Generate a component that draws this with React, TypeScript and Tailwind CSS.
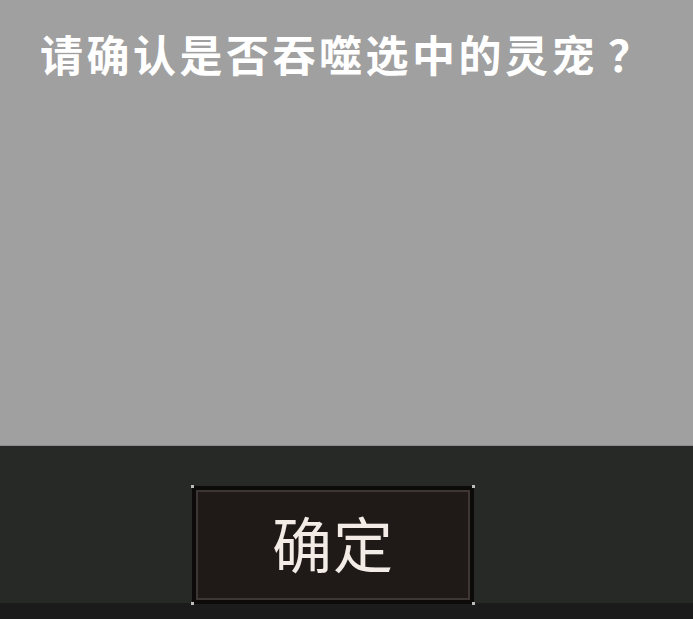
export default function App() {
  return (
    <div className="w-[693px] h-[619px] flex flex-col overflow-hidden" style={{ fontFamily: '"Noto Sans CJK SC", "Noto Sans", sans-serif' }}>
      <div className="h-[445px] bg-[#a0a0a0] pl-[40px] pt-[25px]">
        <div className="text-[43px] leading-[56px] font-bold text-white tracking-[3.5px] whitespace-nowrap">请确认是否吞噬选中的灵宠<span className="tracking-normal pl-[10px]">？</span></div>
      </div>
      <div className="h-[158px] bg-[#272927] flex pl-[192px] pt-[40px] border-t border-[#8c8c8c]">
        <div className="relative w-[282px] h-[118px] bg-[#0d0b0a] p-[4px]">
          <div className="w-full h-full border-2 border-[#3e3634] bg-[#1f1917] flex items-center justify-center">
            <span className="text-[60px] leading-none text-[#f2ebe6] tracking-[1px] -mt-[6px]">确定</span>
          </div>
          <div className="absolute left-[-1px] top-[-1px] w-[3px] h-[3px] bg-[#bdbdbd]" />
          <div className="absolute right-[-1px] top-[-1px] w-[3px] h-[3px] bg-[#bdbdbd]" />
          <div className="absolute left-[-1px] bottom-[-1px] w-[3px] h-[3px] bg-[#bdbdbd]" />
          <div className="absolute right-[-1px] bottom-[-1px] w-[3px] h-[3px] bg-[#bdbdbd]" />
        </div>
      </div>
      <div className="flex-1 bg-[#1b1b1b]" />
    </div>
  );
}
